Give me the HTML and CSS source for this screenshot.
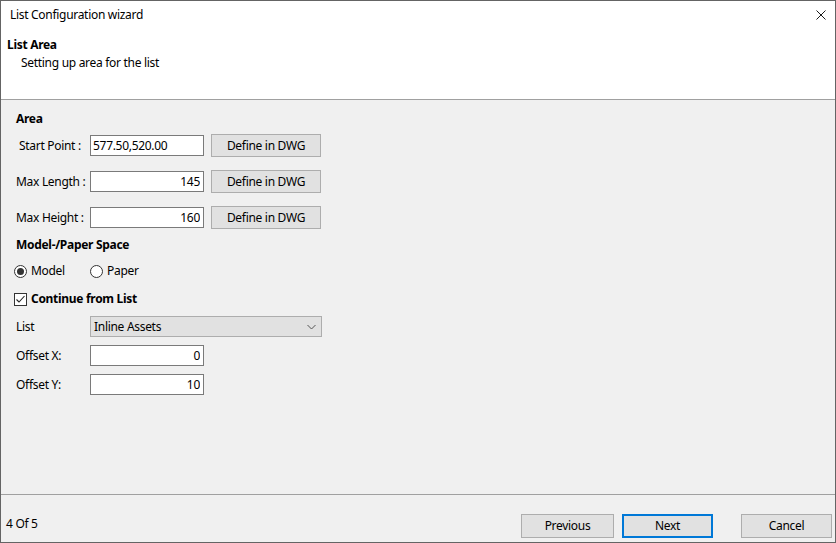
FILE: index.html
```html
<!DOCTYPE html>
<html lang="en-US">
	<head>
		<title>List Configuration wizard</title>
		<link rel="stylesheet" href="styles.css">
	</head>
	<body>
		<div class="window">
			<div class="title-bar">
				<span class="title">List Configuration wizard</span>
				<button class="close-btn" aria-label="Close">
					<svg width="10" height="10" viewBox="0 0 10 10">
						<path d="M0.5 0.5 L9.5 9.5 M9.5 0.5 L0.5 9.5" stroke="#1a1a1a" stroke-width="1" fill="none"/>
					</svg>
				</button>
			</div>
			<div class="header">
				<div class="header-title">List Area</div>
				<div class="header-sub">Setting up area for the list</div>
			</div>

			<div class="content">
				<div class="section-title">Area</div>
				<div class="area-grid">
					<label class="label start-label">Start Point :</label>
					<input class="text-box left" type="text" value="577.50,520.00">
					<button class="define-btn">Define in DWG</button>

					<label class="label">Max Length :</label>
					<input class="text-box" type="text" value="145">
					<button class="define-btn">Define in DWG</button>

					<label class="label">Max Height :</label>
					<input class="text-box" type="text" value="160">
					<button class="define-btn">Define in DWG</button>
				</div>

				<div class="section-title space-title">Model-/Paper Space</div>
				<div class="radio-row">
					<span class="radio-item">
						<span class="radio checked"></span>
						Model
					</span>
					<span class="radio-item">
						<span class="radio"></span>
						Paper
					</span>
				</div>

				<div class="check-row">
					<span class="check-box">
						<svg width="11" height="11" viewBox="0 0 11 11">
							<path d="M1.5 5.5 L4 8 L9.5 2" stroke="#222" stroke-width="1.1" fill="none"/>
						</svg>
					</span>
					<span class="check-label">Continue from List</span>
				</div>

				<div class="list-grid">
					<label class="label">List</label>
					<div class="select-box">
						<span>Inline Assets</span>
						<svg width="9" height="6" viewBox="0 0 9 6">
							<path d="M0.5 1 L4.5 5 L8.5 1" stroke="#555" stroke-width="1" fill="none"/>
						</svg>
					</div>

					<label class="label">Offset X:</label>
					<input class="text-box" type="text" value="0">

					<label class="label">Offset Y:</label>
					<input class="text-box" type="text" value="10">
				</div>
			</div>

			<div class="footer">
				<span class="step">4 Of 5</span>
				<div class="footer-buttons">
					<button class="nav-btn prev">Previous</button>
					<button class="nav-btn next">Next</button>
					<button class="nav-btn cancel">Cancel</button>
				</div>
			</div>
		</div>
	</body>
</html>
```

FILE: styles.css
```css
* {
	font-family: "Noto Sans", "Open Sans", sans-serif;
	font-size: 12px;
	letter-spacing: -0.3px;
	box-sizing: border-box;
}

body {
	margin: 0;
	width: 836px;
	height: 543px;
	overflow: hidden;
	background: #2b3a2b;
}

.window {
	width: 836px;
	height: 543px;
	border: 1px solid #646464;
	background: #f0f0f0;
	display: flex;
	flex-direction: column;
	color: #000;
}

/* title + header share the white band */
.title-bar {
	height: 30px;
	background: #fff;
	display: flex;
	align-items: flex-start;
	justify-content: space-between;
	padding: 6px 0 0 9px;
}
.title {
	line-height: 16px;
}
.close-btn {
	border: 0;
	background: transparent;
	padding: 0;
	margin: 3px 9px 0 0;
	width: 10px;
	height: 10px;
	display: flex;
}

.header {
	height: 69px;
	background: #fff;
	border-bottom: 1px solid #a0a0a0;
	padding: 6px 0 0 6px;
}
.header-title {
	font-weight: bold;
	line-height: 16px;
}
.header-sub {
	line-height: 16px;
	margin: 2px 0 0 14px;
}

.content {
	flex: 1;
	padding: 11px 0 0 15px;
}

.section-title {
	font-weight: bold;
	line-height: 16px;
}
.space-title {
	margin-top: 8px;
}

.area-grid {
	display: grid;
	grid-template-columns: 67px 114px 110px;
	grid-auto-rows: 23px;
	column-gap: 7px;
	row-gap: 13px;
	align-items: center;
	margin-top: 7px;
}

.label {
	line-height: 16px;
	white-space: nowrap;
}
.start-label {
	padding-left: 3px;
}

.text-box {
	width: 114px;
	height: 21px;
	border: 1px solid #7a7a7a;
	background: #fff;
	padding: 0 3px 0 2px;
	text-align: right;
	color: #000;
	outline: none;
}
.text-box.left {
	text-align: left;
}

.define-btn {
	height: 23px;
	background: #e1e1e1;
	border: 1px solid #adadad;
	color: #000;
	padding: 0;
}

.radio-row {
	display: flex;
	height: 16px;
	margin-top: 10px;
	margin-left: -2px;
}
.radio-item {
	display: flex;
	align-items: center;
	gap: 4px;
	line-height: 16px;
	width: 76px;
}
.radio {
	width: 13px;
	height: 13px;
	border: 1px solid #333;
	border-radius: 50%;
	background: #fff;
	display: flex;
	align-items: center;
	justify-content: center;
}
.radio.checked::after {
	content: "";
	width: 7px;
	height: 7px;
	border-radius: 50%;
	background: #333;
}

.check-row {
	display: flex;
	align-items: center;
	gap: 4px;
	height: 16px;
	margin: 12px 0 0 -2px;
}
.check-box {
	width: 13px;
	height: 13px;
	border: 1px solid #333;
	background: #fff;
	display: flex;
	align-items: center;
	justify-content: center;
}
.check-label {
	font-weight: bold;
	line-height: 16px;
}

.list-grid {
	display: grid;
	grid-template-columns: 74px 232px;
	grid-auto-rows: 21px;
	row-gap: 8px;
	align-items: center;
	margin-top: 9px;
}
.list-grid .label {
	grid-column: 1;
}
.list-grid .text-box {
	grid-column: 2;
}
.select-box {
	grid-column: 2;
	width: 232px;
	height: 21px;
	background: #e1e1e1;
	border: 1px solid #adadad;
	display: flex;
	align-items: center;
	justify-content: space-between;
	padding: 0 5px 0 3px;
}

.footer {
	height: 48px;
	border-top: 1px solid #a0a0a0;
	display: flex;
	align-items: center;
	justify-content: space-between;
	padding: 18px 3px 4px 5px;
}
.step {
	line-height: 16px;
	margin-top: -4px;
}
.footer-buttons {
	display: flex;
}
.nav-btn {
	height: 24px;
	background: #e1e1e1;
	border: 1px solid #adadad;
	color: #000;
	padding: 0;
}
.prev {
	width: 93px;
	margin-right: 8px;
}
.next {
	width: 91px;
	border: 2px solid #0078d7;
	margin-right: 28px;
}
.cancel {
	width: 91px;
}
```
